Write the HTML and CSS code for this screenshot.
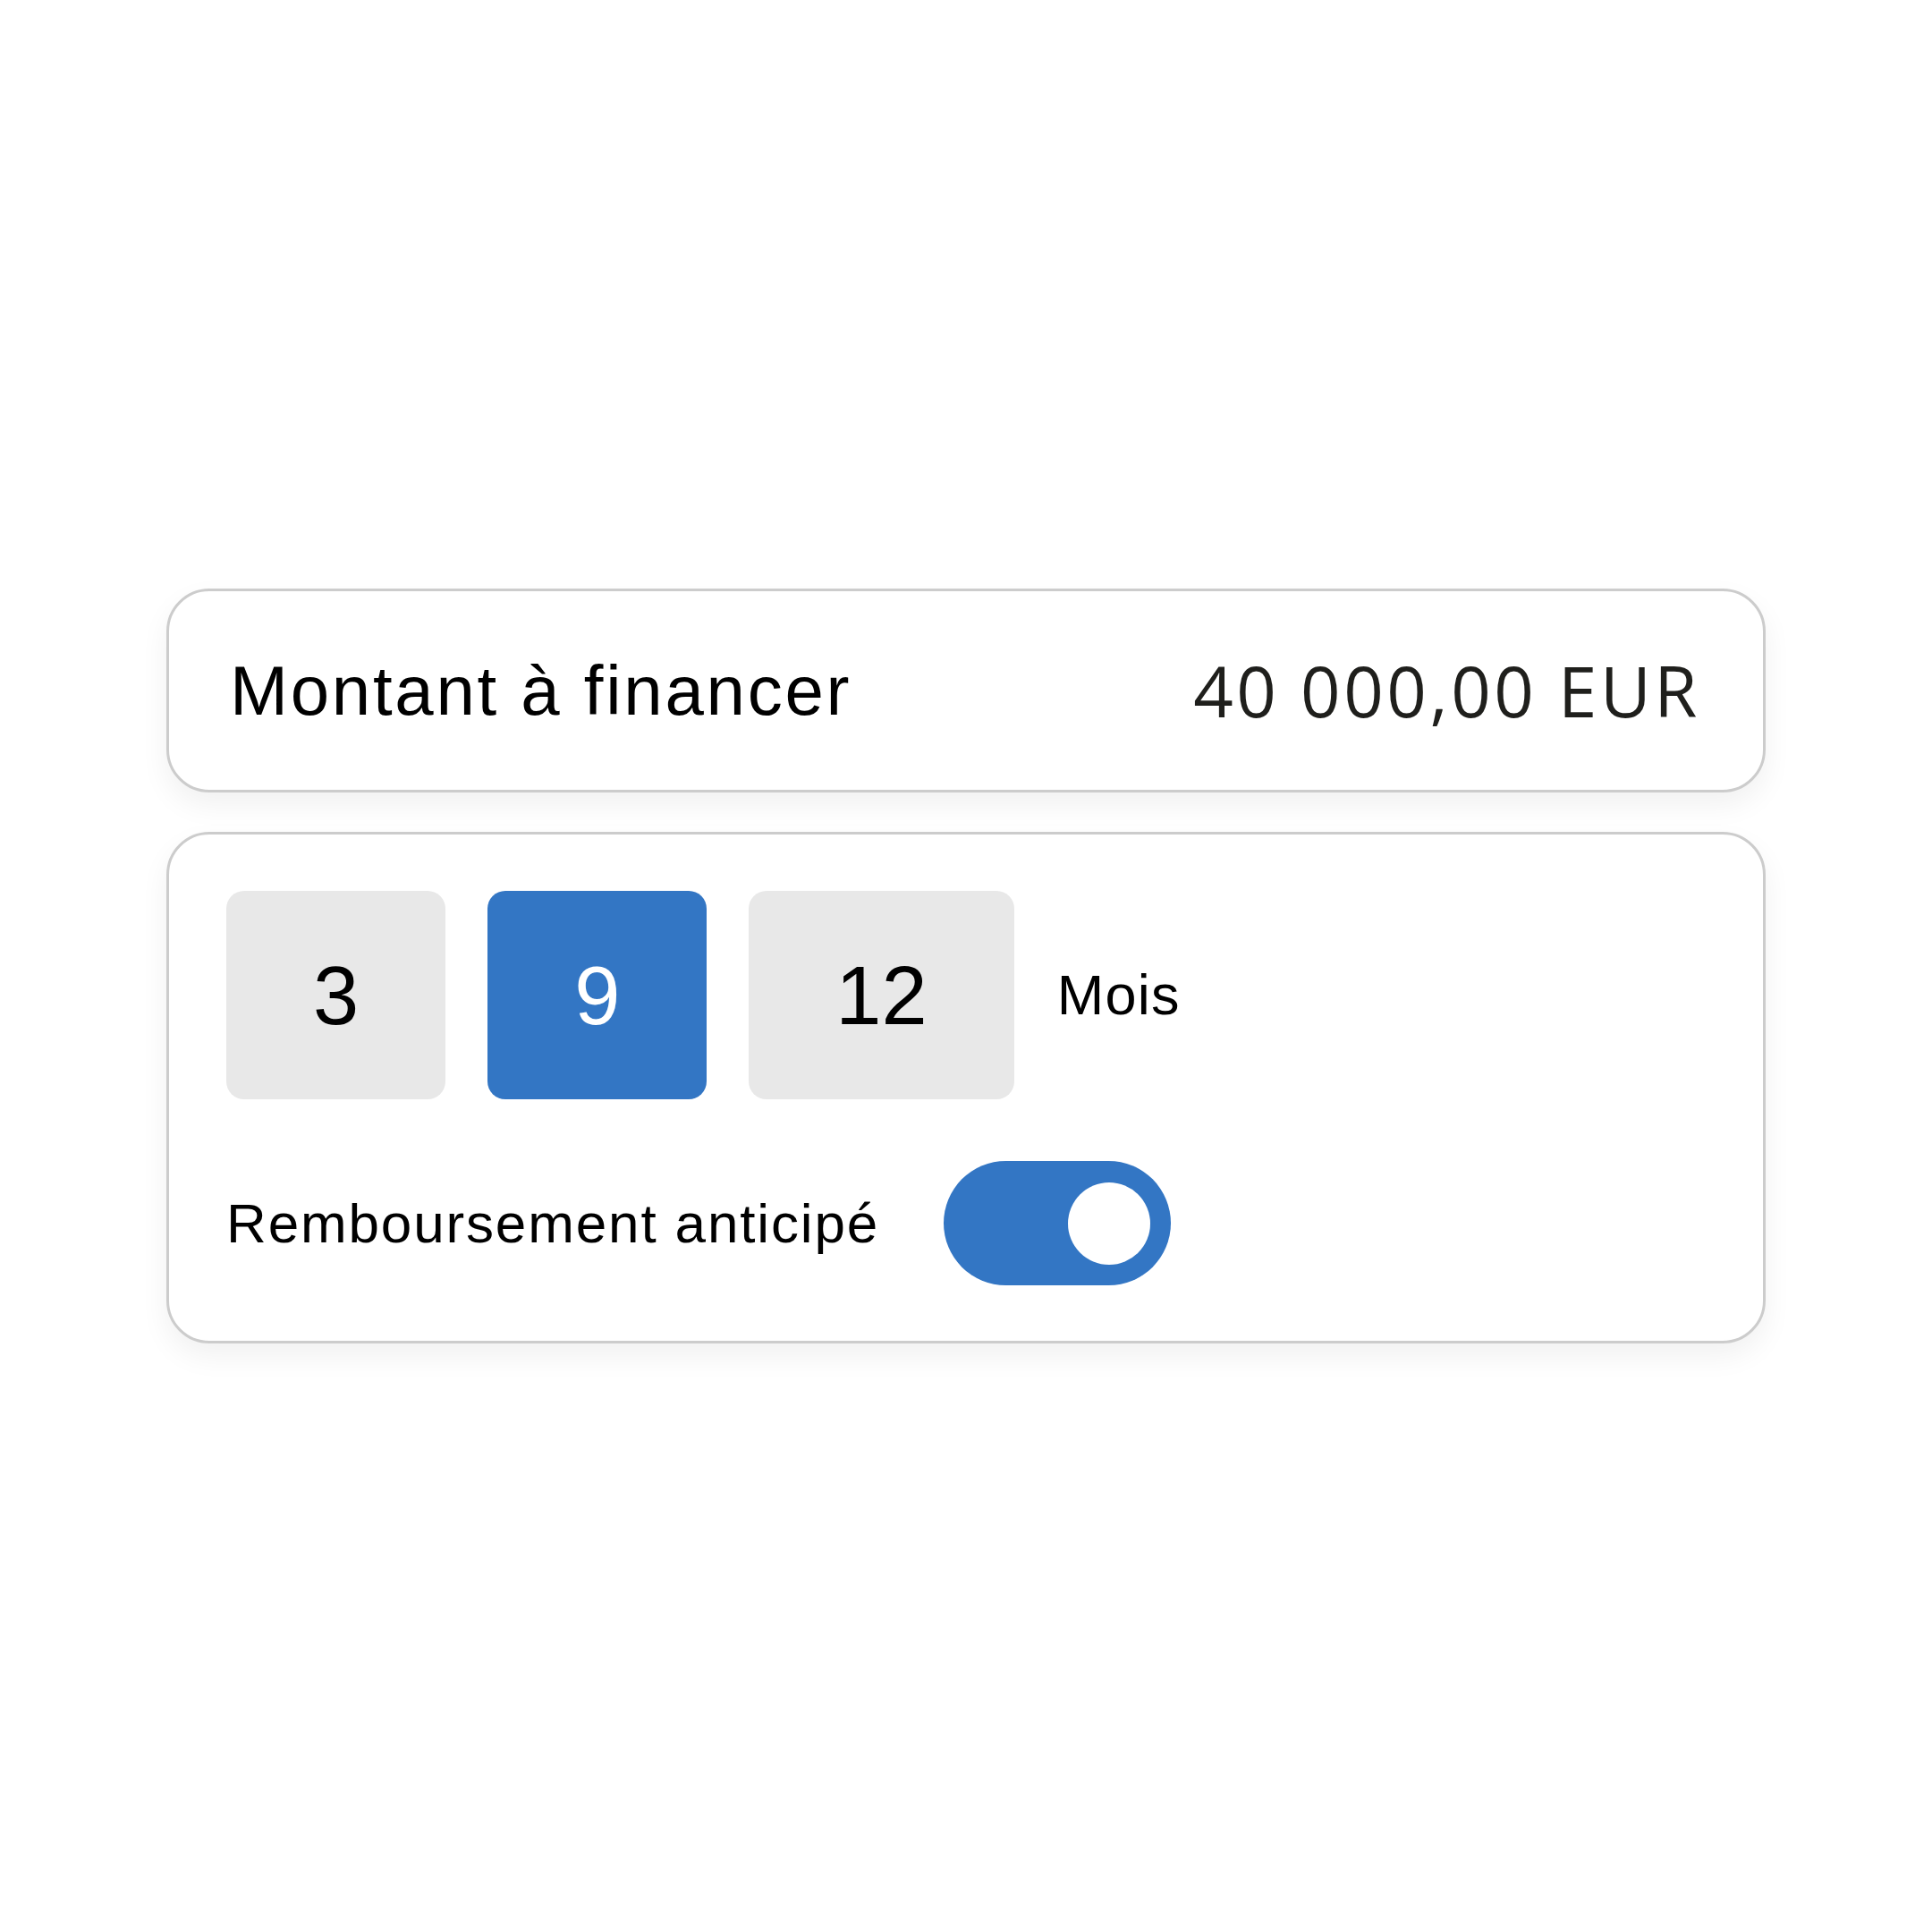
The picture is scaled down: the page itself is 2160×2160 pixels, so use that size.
FILE: index.html
```html
<!DOCTYPE html>
<html lang="fr">
<head>
<meta charset="utf-8">
<title>Financement</title>
<link rel="stylesheet" href="styles.css">
</head>
<body>
<main class="page">
  <section class="card amount-card">
    <span class="amount-label">Montant à financer</span>
    <span class="amount-value">40 000,00 EUR</span>
  </section>
  <section class="card options-card">
    <div class="duration-row">
      <button class="duration" type="button">3</button>
      <button class="duration is-active" type="button">9</button>
      <button class="duration" type="button">12</button>
      <span class="duration-unit">Mois</span>
    </div>
    <div class="toggle-row">
      <span class="toggle-label">Remboursement anticipé</span>
      <span class="toggle is-on" role="switch" aria-checked="true"><span class="toggle-knob"></span></span>
    </div>
  </section>
</main>
</body>
</html>
```
FILE: styles.css
```css
* { box-sizing: border-box; }

html, body {
  margin: 0;
  background: #ffffff;
}

.page {
  min-height: 100vh;
  display: flex;
  flex-direction: column;
  align-items: center;
  justify-content: center;
  gap: 44px;
  font-family: "Liberation Sans", Arial, sans-serif;
  color: #000000;
}

.card {
  width: 1788px;
  background: #ffffff;
  border: 3px solid #cccccc;
  border-radius: 48px;
  box-shadow: 0 14px 32px rgba(0, 0, 0, 0.06);
}

/* Amount summary */
.amount-card {
  height: 228px;
  padding: 0 70px 0 68px;
  display: flex;
  align-items: center;
  justify-content: space-between;
}

.amount-label {
  font-size: 78px;
  letter-spacing: 0.035em;
  line-height: 1;
}

.amount-value {
  font-family: "Open Sans", "Noto Sans", sans-serif;
  font-size: 78px;
  letter-spacing: 0.045em;
  line-height: 1;
  color: #1f1f1c;
}

/* Duration and options */
.options-card {
  padding: 63px 64px 62px 64px;
  display: flex;
  flex-direction: column;
  gap: 69px;
}

.duration-row {
  display: flex;
  align-items: center;
  gap: 47px;
  height: 233px;
}

.duration {
  height: 233px;
  padding: 0 97px;
  border: none;
  border-radius: 20px;
  background: #e8e8e8;
  color: #000000;
  font-family: "Liberation Sans", Arial, sans-serif;
  font-size: 92px;
  line-height: 1;
  display: flex;
  align-items: center;
  justify-content: center;
  cursor: pointer;
}

.duration.is-active {
  background: #3376c4;
  color: #ffffff;
}

.duration-unit {
  font-size: 63px;
  letter-spacing: 0.02em;
  line-height: 1;
  margin-left: 1px;
}

.toggle-row {
  display: flex;
  align-items: center;
  gap: 72px;
  height: 139px;
}

.toggle-label {
  font-size: 62px;
  letter-spacing: 0.03em;
  line-height: 1;
}

.toggle {
  width: 254px;
  height: 139px;
  border-radius: 70px;
  background: #3376c4;
  display: flex;
  align-items: center;
  justify-content: flex-end;
  padding-right: 23px;
}

.toggle-knob {
  width: 92px;
  height: 92px;
  border-radius: 50%;
  background: #ffffff;
}
```
